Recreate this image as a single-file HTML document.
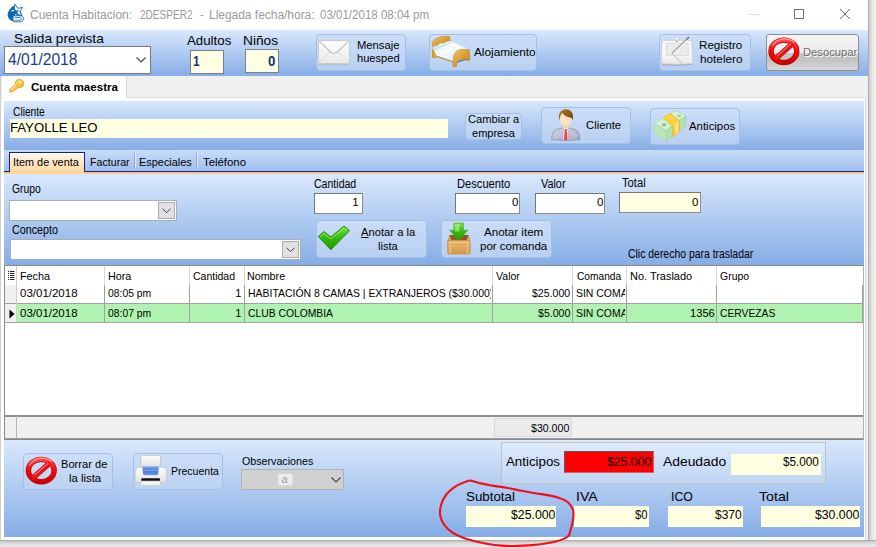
<!DOCTYPE html>
<html><head><meta charset="utf-8"><title>Cuenta Habitacion</title>
<style>
*{box-sizing:border-box;margin:0;padding:0}
html,body{width:876px;height:547px;overflow:hidden;background:#fff;font-family:"Liberation Sans",sans-serif}
.a{position:absolute}
.t{position:absolute;white-space:pre;line-height:1;transform-origin:0 0}
.g{background:linear-gradient(#d9e8fc,#86ade6)}
.btn{position:absolute;border:1px solid #a4c0ea;border-radius:4px;background:linear-gradient(rgba(204,222,247,.92),rgba(189,211,243,.9))}
.inp{position:absolute;background:#fff;border:1px solid #767676;border-right-color:#8c8c8c;border-bottom-color:#8c8c8c}
.y{position:absolute;background:#ffffe1}
.vl{position:absolute;width:1px;background:#a0a0a0}
.hl{position:absolute;height:1px;background:#a0a0a0}
.clip{position:absolute;overflow:hidden;height:18px}
.clip .t{left:0;top:5px}
</style></head><body>
<!-- window shadow / frame -->
<div class="a" style="left:868px;top:0;width:8px;height:547px;background:linear-gradient(90deg,#a2a2a2,#cfcfcf 20%,#e6e6e6 55%,#f3f3f3)"></div>
<div class="a" style="left:0;top:540px;width:876px;height:7px;background:linear-gradient(#9f9f9f,#c9c9c9 20%,#e3e3e3 60%,#ececec)"></div>
<div class="a" style="left:0;top:76px;width:1px;height:464px;background:#cfcfcf"></div>

<!-- title bar -->
<div class="a" style="left:0;top:0;width:868px;height:30px;background:#fff"></div>
<svg class="a" style="left:0;top:0" width="32" height="28" viewBox="0 0 32 28">
<circle cx="14.6" cy="14.6" r="7" fill="#0c68b2"/>
<path d="M8.8 10.6 L13 5.8 L15 6.8 L12 11Z" fill="#0c68b2"/>
<path d="M14.9 4.2 L17.8 8.3 L22.7 7.4 L19.7 11.4 L22.1 15.8 L17.3 14.2 L13.9 17.9 L14.0 12.8 L9.4 10.7 L14.2 9.2Z" fill="#fff" stroke="#0c68b2" stroke-width=".9" stroke-linejoin="miter"/>
<path d="M14.4 8.2 L16.1 10.5 L18.9 10.0 L17.2 12.3 L18.5 14.8 L15.8 13.9 L13.9 16.0 L13.9 13.2 L11.3 11.9 L14.0 11.0Z" fill="#0c68b2"/>
<path d="M13.2 15.8 H21 Q22.4 15.8 23.2 17 Q24.4 18.6 22.8 20.4 L21.4 21.8 H13.8 Q12.2 19 13.2 15.8Z" fill="#fff" stroke="#0c68b2" stroke-width=".9"/>
<path d="M14.6 17.6 H20.6 L21.6 18.8 L20.6 20.2 H14.8" stroke="#0c68b2" stroke-width=".8" fill="none"/>
</svg>
<!-- window controls -->
<div class="a" style="left:749px;top:14px;width:10px;height:1px;background:#dcdcdc"></div>
<div class="a" style="left:794px;top:9px;width:10px;height:10px;border:1px solid #707070"></div>
<svg class="a" style="left:839px;top:8px" width="12" height="12" viewBox="0 0 12 12"><path d="M1 1L11 11M11 1L1 11" stroke="#6a6a6a" stroke-width="1" fill="none"/></svg>

<!-- toolbar -->
<div class="a g" style="left:0;top:30px;width:868px;height:46px"></div>
<div class="a" style="left:4px;top:46px;width:147px;height:28px;background:#fff;border:1px solid #7a7a7a"></div>
<svg class="a" style="left:136px;top:57px" width="10" height="6" viewBox="0 0 10 6"><path d="M.5 .5L5 5L9.5 .5" stroke="#444" stroke-width="1.1" fill="none"/></svg>
<div class="a" style="left:190px;top:50px;width:34px;height:24px;background:#ffffe1;border:1px solid #808080;box-shadow:inset 0 0 0 1px #fafafa"></div>
<div class="a" style="left:245px;top:49px;width:34px;height:24px;background:#ffffe1;border:1px solid #808080;box-shadow:inset 0 0 0 1px #fafafa"></div>
<div class="btn" style="left:316px;top:34px;width:90px;height:37px"></div>
<div class="btn" style="left:429px;top:34px;width:108px;height:37px"></div>
<div class="btn" style="left:659px;top:34px;width:92px;height:37px"></div>
<div class="a" style="left:766px;top:34px;width:93px;height:37px;border:1px solid #8e8e8e;border-radius:3px;background:linear-gradient(#f4f4f4 0%,#ececec 51%,#c6c6c6 53%,#c2c2c2 70%,#d8d8d8 100%)"></div>
<!--ICONS_TOOLBAR-->

<!-- tab strip 1 -->
<div class="a" style="left:1px;top:76px;width:867px;height:22px;background:#f0f0f0"></div>
<div class="a" style="left:1px;top:97px;width:865px;height:1px;background:#dadada"></div>
<div class="a" style="left:2px;top:76px;width:125px;height:25px;background:#fff;border-right:1px solid #d9d9d9"></div>
<!-- tab page -->
<div class="a" style="left:1px;top:98px;width:865px;height:442px;background:#fff"></div>
<div class="a" style="left:865px;top:97px;width:1px;height:443px;background:#dadada"></div>
<div class="a" style="left:866px;top:76px;width:2px;height:464px;background:#f0f0f0"></div>

<!-- client panel -->
<div class="a g" style="left:4px;top:101px;width:860px;height:49px"></div>
<div class="y" style="left:10px;top:119px;width:438px;height:19px"></div>
<div class="btn" style="left:465px;top:113px;width:57px;height:27px"></div>
<div class="btn" style="left:541px;top:107px;width:90px;height:37px"></div>
<div class="btn" style="left:650px;top:108px;width:90px;height:37px"></div>

<!-- inner tab strip -->
<div class="a" style="left:4px;top:150px;width:860px;height:23px;background:linear-gradient(#c9ddf8,#9bbbed)"></div>
<div class="a" style="left:4px;top:171px;width:860px;height:1px;background:#1b1f8a"></div>
<div class="a" style="left:4px;top:172px;width:860px;height:2px;background:linear-gradient(#f3b878,#f9d3a8)"></div>
<div class="a" style="left:9px;top:152px;width:76px;height:20px;border:1px solid #1b1f8a;border-bottom:none;background:linear-gradient(#fff9ee,#ffd8a0)"></div><div class="a" style="left:10px;top:171px;width:74px;height:3px;background:#ffd59a"></div>
<div class="vl" style="left:134px;top:153px;height:16px;background:#8aa5d6"></div><div class="vl" style="left:135px;top:153px;height:16px;background:#e4eefc"></div>
<div class="vl" style="left:196px;top:153px;height:16px;background:#8aa5d6"></div><div class="vl" style="left:197px;top:153px;height:16px;background:#e4eefc"></div>

<!-- form area -->
<div class="a g" style="left:4px;top:174px;width:860px;height:91px"></div>
<div class="a" style="left:9px;top:200px;width:168px;height:21px;background:#fff;border:1px solid #abadb3"></div>
<div class="a" style="left:158px;top:202px;width:17px;height:17px;background:#e1e1e1;border:1px solid #adadad"></div>
<svg class="a" style="left:162px;top:208px" width="9" height="6" viewBox="0 0 9 6"><path d="M.5 .7L4.5 4.7L8.5 .7" stroke="#444" stroke-width="1" fill="none"/></svg>
<div class="a" style="left:10px;top:239px;width:291px;height:21px;background:#fff;border:1px solid #abadb3"></div>
<div class="a" style="left:282px;top:241px;width:17px;height:17px;background:#e1e1e1;border:1px solid #adadad"></div>
<svg class="a" style="left:286px;top:247px" width="9" height="6" viewBox="0 0 9 6"><path d="M.5 .7L4.5 4.7L8.5 .7" stroke="#444" stroke-width="1" fill="none"/></svg>
<div class="inp" style="left:314px;top:193px;width:49px;height:21px"></div>
<div class="inp" style="left:455px;top:193px;width:65px;height:21px"></div>
<div class="inp" style="left:535px;top:193px;width:70px;height:21px"></div>
<div class="inp" style="left:619px;top:192px;width:82px;height:21px;background:#ffffe1"></div>
<div class="btn" style="left:316px;top:220px;width:111px;height:38px"></div>
<div class="btn" style="left:441px;top:220px;width:111px;height:38px"></div>

<!-- grid -->
<div class="a" style="left:4px;top:265px;width:860px;height:175px;background:#fff;border:1px solid #8a8a8a;border-right-color:#b0b0b0"></div>
<div class="a" style="left:5px;top:285px;width:11px;height:37px;background:#f0f0f0"></div>
<div class="a" style="left:16px;top:304px;width:847px;height:18px;background:#b0f2b0"></div>
<div class="hl" style="left:5px;top:303px;width:858px"></div>
<div class="hl" style="left:5px;top:322px;width:858px"></div>
<div class="vl" style="left:16px;top:266px;height:56px;background:#d0d0d0"></div>
<div class="vl" style="left:104px;top:266px;height:19px;background:#d8d8d8"></div><div class="vl" style="left:104px;top:285px;height:37px"></div>
<div class="vl" style="left:189px;top:266px;height:19px;background:#d8d8d8"></div><div class="vl" style="left:189px;top:285px;height:37px"></div>
<div class="vl" style="left:244px;top:266px;height:19px;background:#d8d8d8"></div><div class="vl" style="left:244px;top:285px;height:37px"></div>
<div class="vl" style="left:492px;top:266px;height:19px;background:#d8d8d8"></div><div class="vl" style="left:492px;top:285px;height:37px"></div>
<div class="vl" style="left:572px;top:266px;height:19px;background:#d8d8d8"></div><div class="vl" style="left:572px;top:285px;height:37px"></div>
<div class="vl" style="left:626px;top:266px;height:19px;background:#d8d8d8"></div><div class="vl" style="left:626px;top:285px;height:37px"></div>
<div class="vl" style="left:716px;top:266px;height:19px;background:#d8d8d8"></div><div class="vl" style="left:716px;top:285px;height:37px"></div>
<div class="vl" style="left:862px;top:285px;height:37px"></div>
<!-- header icon & row indicator -->
<svg class="a" style="left:8px;top:271px" width="7" height="10" viewBox="0 0 7 10"><path d="M0 .5h1M2 .5h4.4M0 2.5h1M2 2.5h4.4M0 4.5h1M2 4.5h4.4M0 6.5h1M2 6.5h4.4M0 8.5h1M2 8.5h4.4" stroke="#222" stroke-width="1"/></svg>
<svg class="a" style="left:9px;top:308.5px" width="6" height="10" viewBox="0 0 6 10"><path d="M.5 .5L5.5 5L.5 9.5Z" fill="#000"/></svg>
<!-- footer -->
<div class="a" style="left:5px;top:415px;width:858px;height:24px;background:#f0f0f0;border-top:2px solid #8f8f8f;border-bottom:1px solid #9a9a9a"></div>
<div class="vl" style="left:16px;top:416px;height:22px;background:#b5b5b5"></div>
<div class="a" style="left:494px;top:418px;width:78px;height:19px;background:#e8eaec;border:1px solid #d9d9d9"></div>
<!-- clipped cells -->
<div class="clip" style="left:247.5px;top:283px;width:243.5px"><span class="t" style="font-size:11px;transform:scaleX(.95)">HABITACIÓN 8 CAMAS | EXTRANJEROS ($30.000)</span></div>
<div class="clip" style="left:575.5px;top:283px;width:49px"><span class="t" style="font-size:11px;transform:scaleX(.95)">SIN COMANDA</span></div>
<div class="clip" style="left:575.5px;top:303px;width:49px"><span class="t" style="font-size:11px;transform:scaleX(.95)">SIN COMANDA</span></div>

<!-- bottom panel -->
<div class="a g" style="left:4px;top:440px;width:860px;height:97px"></div>
<div class="btn" style="left:23px;top:453px;width:90px;height:37px"></div>
<div class="btn" style="left:133px;top:453px;width:90px;height:37px"></div>
<div class="a" style="left:241px;top:469px;width:103px;height:21px;background:#d1d1d1;border:1px solid #b2b2b2"></div>
<svg class="a" style="left:331px;top:477px" width="10" height="6" viewBox="0 0 10 6"><path d="M.5 .5L5 5L9.5 .5" stroke="#444" stroke-width="1.1" fill="none"/></svg>
<div class="a" style="left:501px;top:442px;width:325px;height:42px;background:rgba(255,255,255,.16);border:1px solid #c4c2be"></div>
<div class="a" style="left:564px;top:451px;width:90px;height:22px;background:#f00;border:1px solid #5a5a5a;border-right-color:#c66;border-bottom-color:#c66"></div>
<div class="y" style="left:731px;top:454px;width:90px;height:21px"></div>
<div class="y" style="left:466px;top:506px;width:90px;height:21px"></div>
<div class="y" style="left:574px;top:506px;width:75px;height:21px"></div>
<div class="y" style="left:668px;top:506px;width:75px;height:21px"></div>
<div class="y" style="left:761px;top:506px;width:99px;height:21px"></div>
<!--ICONS_BEGIN--><svg class="a" style="left:0;top:0" width="876" height="547" viewBox="0 0 876 547">
<defs>
<linearGradient id="env" x1="0" y1="0" x2="0" y2="1"><stop offset="0" stop-color="#fdfdfd"/><stop offset="1" stop-color="#e9e9e9"/></linearGradient>
<linearGradient id="wood" x1="0" y1="0" x2="1" y2="1"><stop offset="0" stop-color="#f3c862"/><stop offset=".5" stop-color="#dc9e30"/><stop offset="1" stop-color="#b97b18"/></linearGradient>
<linearGradient id="sheet" x1="0" y1="0" x2="1" y2="1"><stop offset="0" stop-color="#cfe8fb"/><stop offset=".45" stop-color="#fbfdff"/><stop offset="1" stop-color="#c6e1f7"/></linearGradient>
<linearGradient id="red" x1="0" y1="0" x2="0" y2="1"><stop offset="0" stop-color="#ff4a4a"/><stop offset=".45" stop-color="#f20d0d"/><stop offset="1" stop-color="#d10000"/></linearGradient>
<linearGradient id="tab" x1="0" y1="0" x2="0" y2="1"><stop offset="0" stop-color="#fdfdfd"/><stop offset=".7" stop-color="#f3f3f3"/><stop offset="1" stop-color="#e6e6e6"/></linearGradient>
<linearGradient id="gold" x1="0" y1="0" x2="1" y2="1"><stop offset="0" stop-color="#ffe890"/><stop offset=".6" stop-color="#f7c22c"/><stop offset="1" stop-color="#e79a18"/></linearGradient>
<linearGradient id="suit" x1="0" y1="0" x2="1" y2="1"><stop offset="0" stop-color="#d9dbe8"/><stop offset=".6" stop-color="#b7bacd"/><stop offset="1" stop-color="#8e92ac"/></linearGradient>
<linearGradient id="hair" x1="0" y1="0" x2="1" y2="1"><stop offset="0" stop-color="#b07a22"/><stop offset="1" stop-color="#6e4308"/></linearGradient>
<linearGradient id="band" x1="0" y1="0" x2="1" y2="0"><stop offset="0" stop-color="#ffc41a"/><stop offset=".7" stop-color="#ffe9a8"/><stop offset="1" stop-color="#ffc41a"/></linearGradient>
<linearGradient id="grn" x1="0" y1="0" x2="0" y2="1"><stop offset="0" stop-color="#7de34a"/><stop offset=".5" stop-color="#33bb0a"/><stop offset="1" stop-color="#249a00"/></linearGradient>
<linearGradient id="crate" x1="0" y1="0" x2="0" y2="1"><stop offset="0" stop-color="#f2c27c"/><stop offset="1" stop-color="#d99a4a"/></linearGradient>
<linearGradient id="prn" x1="0" y1="0" x2="0" y2="1"><stop offset="0" stop-color="#ffffff"/><stop offset="1" stop-color="#e2e2e2"/></linearGradient>
<linearGradient id="blu" x1="0" y1="0" x2="0" y2="1"><stop offset="0" stop-color="#7aa7ea"/><stop offset=".5" stop-color="#3d74d6"/><stop offset="1" stop-color="#6d9ce6"/></linearGradient>
</defs>
<!-- envelope -->
<g>
<path d="M318.6 64 H349.4" stroke="#a7a9ad" stroke-width="1"/>
<rect x="318.5" y="40.5" width="31" height="23" rx="1" fill="url(#env)" stroke="#c9cbd0"/>
<path d="M319 63 L330 51.5 M349 63 L338 51.5" stroke="#dcdcdc" stroke-width="1" fill="none"/>
<path d="M319.3 41.2 L330.5 52 Q334 55 337.5 52 L348.7 41.2" stroke="#bfc0c4" stroke-width="1.1" fill="none"/>
</g>
<!-- bed -->
<g>
<path d="M432.2 41.9 Q437 36.6 445 36.3 L449.8 36.6 L450.2 41.3 L432.6 47.6Z" fill="url(#wood)" stroke="#c58a20" stroke-width=".6"/>
<path d="M432 48.6 L432 57.8 L435.6 58.4 L436.2 49.8Z" fill="#d99a2a"/>
<path d="M432.6 47.2 L450.2 41 L467 48.2 L453 60.6 L436.2 55.6Z" fill="url(#sheet)"/>
<path d="M432.6 47 L438 45 L450.2 41 L452.5 42 L441 47.4 L436 50.2 L432.8 49.4Z" fill="#c6e2f8"/>
<path d="M438.5 44.6 Q441 43 444 43.4 Q442 45.6 439.2 46Z M445 42.6 Q447.6 41 450.2 41.6 Q448.6 43.6 445.8 43.8Z" fill="#f4faff"/>
<path d="M436 55.6 L453 61.4 L453 62.6 L436 56.8Z" fill="#c98a1e"/>
<path d="M453 66.4 L453.4 57 Q455.6 49.2 461.4 49.4 L469.2 49.8 L469.9 60.2 L466.2 60.6 L466 58.4 L456.8 61.4 L456.6 66.6Z" fill="url(#wood)" stroke="#c58a20" stroke-width=".6"/>
<path d="M457 62.4 L466 59.2" stroke="#2b58d8" stroke-width=".9"/>
</g>
<!-- tablet -->
<g>
<path d="M676.8 36.4 q2.2 0 2.4 3.8 h-4.8 q.2-3.8 2.4-3.8z" fill="#f4f4f4" stroke="#c0c0c0" stroke-width=".6"/>
<path d="M662 64.2 Q677 66.2 692.6 64" stroke="#a9abb0" stroke-width="1.4" fill="none"/>
<path d="M662.4 40.4 H691.2 Q692.8 52 692.6 63.4 Q677 65.2 661.4 63.6 Q661 52 662.4 40.4Z" fill="url(#tab)" stroke="#c6c8cc" stroke-width=".7"/>
<rect x="666.3" y="43" width="21.8" height="12.4" fill="#ebebec" stroke="#d6d6d9" stroke-width=".8"/>
<rect x="676" y="40.6" width="1.8" height="1.4" fill="#f6a56a"/>
<path d="M671.9 53.6 L681.8 63" stroke="#d3d3d6" stroke-width="1.7"/>
<path d="M688.9 37.3 L671.8 53.4" stroke="#98989c" stroke-width="1.2"/>
<path d="M689.6 38 L673 53.8" stroke="#fafafa" stroke-width=".7"/>
<path d="M689 37.2 L686.6 39.5" stroke="#7a7a7e" stroke-width="1.6"/>
</g>
<!-- no entry top -->
<g>
<ellipse cx="783.9" cy="51.35" rx="12.9" ry="11.3" fill="none" stroke="#b00000" stroke-width="5.3"/>
<path d="M774.9 59.2 L792.9 43.5" stroke="#b00000" stroke-width="5.3"/>
<ellipse cx="783.9" cy="51.2" rx="12.9" ry="11.3" fill="none" stroke="url(#red)" stroke-width="4.4"/>
<path d="M774.9 59.1 L792.9 43.3" stroke="#f01414" stroke-width="4.4"/>
<path d="M772.3 46.0 Q775.9 39.6 783.9 38.9 Q790.9 38.9 794.5 42.6" stroke="#ff9a9a" stroke-width="1.3" fill="none" opacity=".9"/>
<path d="M777.3 55.8 L791.1 43.6" stroke="#ff8c8c" stroke-width="1.1" opacity=".85"/>
</g>
<!-- key -->
<g>
<path d="M10 92.6 L9.6 89.6 L15.4 84.4 Q14.4 81 17.4 79.6 Q20.6 78.4 22.8 80.6 Q24.6 83 23.2 85.8 Q21.4 88.2 18.4 87.4 L17 88.8 L15.8 88.4 L15.4 90 L14 89.8 L13.4 91.4 L12 91.4Z" fill="url(#gold)" stroke="#e39a2c" stroke-width=".8"/>
<circle cx="20.4" cy="82.2" r="1.2" fill="#fff6d0"/>
<path d="M11 90 L16 85.4" stroke="#fff3b8" stroke-width=".9"/>
</g>
<!-- person -->
<g>
<path d="M551.8 139.6 Q551.6 131.4 556.4 129.6 L562.6 127.8 L569.2 127.8 L575.4 129.6 Q580 131.6 579.8 139.6 Q566 141.4 551.8 139.6Z" fill="url(#suit)" stroke="#8489a3" stroke-width=".7"/>
<path d="M562.8 127.6 L565.8 130 L568.8 127.6 L567.6 126 L564 126Z" fill="#fff"/>
<path d="M564.2 128.8 L567.4 128.8 L568.4 140 L563.2 140Z" fill="#f4f4f8"/><path d="M564.9 129 L566.7 129 L567.6 140 L564 140Z" fill="#f0404a"/><path d="M570.5 131.5 L578.5 134 L578.8 139.3 Q574 140 570 140.1Z" fill="#fff" opacity=".18"/>
<path d="M563 122 L563 127 Q565.8 129 568.6 127 L568.6 122Z" fill="#f7cf9c"/>
<ellipse cx="565.8" cy="118.8" rx="5.6" ry="7.2" fill="#fde2bd"/>
<path d="M559.4 120.4 Q557.6 112.4 562.6 110 Q568 108 571.6 111.8 Q574 115.4 572.4 120.2 Q571.8 118 570.6 117.6 Q565 116.8 561.8 112.8 Q559.8 116 559.4 120.4Z" fill="url(#hair)"/>
</g>
<!-- money -->
<g>
<path d="M654 123.3 L675.8 110.4 L685.8 116 L666.1 130.5Z" fill="#d2f3d2" stroke="#a8dba8" stroke-width=".6"/>
<path d="M654 123.3 L666.1 130.5 L666.1 141.6 L654 131.9Z" fill="#b9e7b9" stroke="#9fd49f" stroke-width=".6"/>
<path d="M666.1 130.5 L685.8 116 L685.8 125.7 L666.1 141.6Z" fill="#afe0af" stroke="#98cd98" stroke-width=".6"/>
<ellipse cx="664" cy="124.8" rx="2.2" ry="1.6" fill="#86c486"/>
<ellipse cx="679.2" cy="116" rx="2" ry="1.4" fill="#9fd49f"/>
<path d="M663.4 118 L670 113.2 L679.4 120.8 L672.8 126.6Z" fill="#ffd24a"/>
<path d="M672.8 126.6 L679.4 120.8 L679.4 131.4 L672.8 136.8Z" fill="url(#band)"/>
<path d="M663.4 118 L670 113.2 L679.4 120.8 L679.4 131.4 L672.8 136.8 L672.8 126.6Z" fill="none" stroke="#f7b514" stroke-width=".8"/>
</g>
<!-- check -->
<g>
<path d="M318.3 236.6 L323.8 231.6 L330.9 237 L344 226.1 L349.5 230.7 L330.9 249.7Z" fill="url(#grn)" stroke="#1d8a00" stroke-width="1" stroke-linejoin="round"/>
<path d="M320.4 236.4 L323.8 233.4 L330.9 238.8 L344 228 L346.8 230.2" stroke="#a4f07a" stroke-width="1" fill="none" opacity=".8"/>
</g>
<!-- crate -->
<g>
<path d="M449.4 234.9 L468.7 234.9 L470 240.6 L447.7 240.6Z" fill="#8a5a24"/>
<path d="M449.4 234.9 L451.6 240.4 L447.8 240.6Z M468.7 234.9 L466.4 240.4 L470 240.6Z" fill="#e2a85c"/>
<rect x="447.7" y="240.4" width="22.3" height="13.5" rx="1" fill="url(#crate)" stroke="#c4863a" stroke-width=".8"/>
<path d="M448.4 244.6 H469.4 M448.4 248 H469.4 M448.4 251 H469.4" stroke="#cf9446" stroke-width=".6"/>
<path d="M450.2 241 V253.4 M467.6 241 V253.4" stroke="#e9bd82" stroke-width="1.6"/>
<path d="M454 223.2 H463.3 V230.3 H467.9 L458.6 240 L449.8 230.3 H454Z" fill="url(#grn)" stroke="#3cae1a" stroke-width=".7" stroke-linejoin="round"/>
<path d="M455 224 H459.4 V231.4 H455Z" fill="#b8f49a" opacity=".6"/>
</g>
<!-- printer -->
<g>
<path d="M140.6 467 V456.4 H141.6 V455.6 H159.4 V455 H160.4 V467Z" fill="url(#prn)" stroke="#bdbdbd" stroke-width=".7"/>
<path d="M139.6 467.2 H161.8 Q166.8 467.6 166.6 472.6 V480.2 Q166.6 482.4 164.4 482.4 H137.6 Q135.4 482.4 135.4 480.2 V472.6 Q135.4 467.6 139.6 467.2Z" fill="url(#prn)" stroke="#c2c2c2" stroke-width=".7"/>
<path d="M142.4 466.6 H158.8 L158.2 474 Q157.8 475.2 156.6 475.2 H144.6 Q143.4 475.2 143 474Z" fill="url(#blu)"/>
<path d="M143 470.6 H158.2" stroke="#9dc0f4" stroke-width=".7"/>
<rect x="141.2" y="478.2" width="18.8" height="2.8" rx=".8" fill="#111"/>
<path d="M141.6 481 H159.6 L160.8 485.4 H140.4Z" fill="#f4f4f4" stroke="#c4c4c4" stroke-width=".6"/>
</g>
<!-- no entry bottom -->
<g>
<ellipse cx="41.25" cy="470.59999999999997" rx="12.9" ry="11.3" fill="none" stroke="#b00000" stroke-width="5.3"/>
<path d="M32.2 478.5 L50.2 462.7" stroke="#b00000" stroke-width="5.3"/>
<ellipse cx="41.25" cy="470.45" rx="12.9" ry="11.3" fill="none" stroke="url(#red)" stroke-width="4.4"/>
<path d="M32.2 478.3 L50.2 462.6" stroke="#f01414" stroke-width="4.4"/>
<path d="M29.6 465.2 Q33.2 458.8 41.2 458.1 Q48.2 458.1 51.9 461.8" stroke="#ff9a9a" stroke-width="1.3" fill="none" opacity=".9"/>
<path d="M34.6 475.1 L48.5 462.8" stroke="#ff8c8c" stroke-width="1.1" opacity=".85"/>
</g>
<!-- obs page icon -->
<g>
<path d="M278 473.8 H290.4 L292.8 476.2 V485.2 H278Z" fill="#ececec" stroke="#dadada" stroke-width=".5"/>
<path d="M290.4 473.8 V476.2 H292.8Z" fill="#fafafa"/>
</g>
</svg>
<span class="t" style="left:281.5px;top:474.3px;font-size:11px;font-style:italic;color:#9a9a9a">a</span>
<!--ICONS_END-->
<span class="t" style="left:30.00px;top:9.00px;font-size:12px;transform:scaleX(1.0000);color:#9a9a9a;">Cuenta Habitacion:</span>
<span class="t" style="left:140.00px;top:9.00px;font-size:12px;transform:scaleX(0.8387);color:#9a9a9a;">2DESPER2</span>
<span class="t" style="left:199.50px;top:9.00px;font-size:12px;transform:scaleX(0.8750);color:#9a9a9a;">-</span>
<span class="t" style="left:209.00px;top:9.00px;font-size:12px;transform:scaleX(0.9952);color:#9a9a9a;">Llegada fecha/hora:</span>
<span class="t" style="left:320.00px;top:9.00px;font-size:12px;transform:scaleX(0.9611);color:#9a9a9a;">03/01/2018 08:04 pm</span>
<span class="t" style="left:13.79px;top:32.00px;font-size:13.6px;transform:scaleX(1.0068);color:#000;">Salida prevista</span>
<span class="t" style="left:7.50px;top:52.00px;font-size:16px;transform:scaleX(0.9761);color:#1c3a8e;">4/01/2018</span>
<span class="t" style="left:187.00px;top:34.00px;font-size:13.4px;transform:scaleX(0.9911);color:#000;">Adultos</span>
<span class="t" style="left:242.68px;top:34.00px;font-size:13.4px;transform:scaleX(1.0242);color:#000;">Niños</span>
<span class="t" style="left:192.88px;top:54.00px;font-size:14px;transform:scaleX(0.8500);color:#14307c;font-weight:bold;">1</span>
<span class="t" style="left:267.50px;top:54.00px;font-size:14px;transform:scaleX(0.9375);color:#14307c;font-weight:bold;">0</span>
<span class="t" style="left:356.98px;top:40.00px;font-size:11px;transform:scaleX(1.0200);color:#000;">Mensaje</span>
<span class="t" style="left:356.99px;top:53.00px;font-size:11px;transform:scaleX(1.0098);color:#000;">huesped</span>
<span class="t" style="left:474.20px;top:47.00px;font-size:11px;transform:scaleX(1.0719);color:#000;">Alojamiento</span>
<span class="t" style="left:699.34px;top:40.00px;font-size:11px;transform:scaleX(1.0575);color:#000;">Registro</span>
<span class="t" style="left:700.43px;top:54.00px;font-size:11px;transform:scaleX(1.0692);color:#000;">hotelero</span>
<span class="t" style="left:803.88px;top:48.00px;font-size:11px;transform:scaleX(1.0212);color:#ffffff;">Desocupar</span>
<span class="t" style="left:802.88px;top:47.00px;font-size:11px;transform:scaleX(1.0212);color:#6d6d6d;">Desocupar</span>
<span class="t" style="left:31.00px;top:81.00px;font-size:11.6px;transform:scaleX(1.0000);color:#000;font-weight:bold;">Cuenta maestra</span>
<span class="t" style="left:12.50px;top:106.00px;font-size:12px;transform:scaleX(0.8514);color:#000;">Cliente</span>
<span class="t" style="left:9.52px;top:121.00px;font-size:13.4px;transform:scaleX(0.9830);color:#000;">FAYOLLE LEO</span>
<span class="t" style="left:468.00px;top:114.00px;font-size:11px;transform:scaleX(1.0098);color:#000;">Cambiar a</span>
<span class="t" style="left:472.20px;top:128.00px;font-size:11px;transform:scaleX(1.0023);color:#000;">empresa</span>
<span class="t" style="left:586.00px;top:120.00px;font-size:11px;transform:scaleX(1.0235);color:#000;">Cliente</span>
<span class="t" style="left:688.80px;top:121.00px;font-size:11px;transform:scaleX(1.0356);color:#000;">Anticipos</span>
<span class="t" style="left:13.36px;top:157.00px;font-size:11.5px;transform:scaleX(0.9435);color:#000;">Item de venta</span>
<span class="t" style="left:89.57px;top:157.00px;font-size:11.5px;transform:scaleX(0.9262);color:#000;">Facturar</span>
<span class="t" style="left:139.25px;top:157.00px;font-size:11.5px;transform:scaleX(0.9500);color:#000;">Especiales</span>
<span class="t" style="left:202.50px;top:157.00px;font-size:11.5px;transform:scaleX(0.9884);color:#000;">Teléfono</span>
<span class="t" style="left:11.50px;top:183.00px;font-size:12px;transform:scaleX(0.8636);color:#000;">Grupo</span>
<span class="t" style="left:11.50px;top:224.00px;font-size:12px;transform:scaleX(0.8922);color:#000;">Concepto</span>
<span class="t" style="left:314.40px;top:178.00px;font-size:12px;transform:scaleX(0.8792);color:#000;">Cantidad</span>
<span class="t" style="left:457.47px;top:178.00px;font-size:12px;transform:scaleX(0.9286);color:#000;">Descuento</span>
<span class="t" style="left:541.30px;top:178.00px;font-size:12px;transform:scaleX(0.9037);color:#000;">Valor</span>
<span class="t" style="left:622.20px;top:177.00px;font-size:12px;transform:scaleX(0.9320);color:#000;">Total</span>
<span class="t" style="left:352.25px;top:197.00px;font-size:11.5px;transform:scaleX(1.0000);color:#000;">1</span>
<span class="t" style="left:512.00px;top:197.00px;font-size:11.5px;transform:scaleX(1.0000);color:#000;">0</span>
<span class="t" style="left:597.00px;top:197.00px;font-size:11.5px;transform:scaleX(1.0000);color:#000;">0</span>
<span class="t" style="left:692.00px;top:197.00px;font-size:11.5px;transform:scaleX(1.0000);color:#000;">0</span>
<span class="t" style="left:361.10px;top:227.00px;font-size:11px;transform:scaleX(1.0189);color:#000;"><u>A</u>notar a la</span>
<span class="t" style="left:378.40px;top:241.00px;font-size:11px;transform:scaleX(1.0050);color:#000;">lista</span>
<span class="t" style="left:484.00px;top:227.00px;font-size:11px;transform:scaleX(1.0536);color:#000;">Anotar item</span>
<span class="t" style="left:480.30px;top:241.00px;font-size:11px;transform:scaleX(1.0469);color:#000;">por comanda</span>
<span class="t" style="left:627.60px;top:248.00px;font-size:12px;transform:scaleX(0.8694);color:#000;">Clic derecho para trasladar</span>
<span class="t" style="left:19.82px;top:271.00px;font-size:11px;transform:scaleX(0.9833);color:#000;">Fecha</span>
<span class="t" style="left:107.52px;top:271.00px;font-size:11px;transform:scaleX(0.9783);color:#000;">Hora</span>
<span class="t" style="left:193.00px;top:271.00px;font-size:11px;transform:scaleX(0.9545);color:#000;">Cantidad</span>
<span class="t" style="left:247.03px;top:271.00px;font-size:11px;transform:scaleX(0.9737);color:#000;">Nombre</span>
<span class="t" style="left:496.00px;top:271.00px;font-size:11px;transform:scaleX(0.9600);color:#000;">Valor</span>
<span class="t" style="left:576.60px;top:271.00px;font-size:11px;transform:scaleX(0.9250);color:#000;">Comanda</span>
<span class="t" style="left:629.60px;top:271.00px;font-size:11px;transform:scaleX(0.9967);color:#000;">No. Traslado</span>
<span class="t" style="left:720.40px;top:271.00px;font-size:11px;transform:scaleX(0.9533);color:#000;">Grupo</span>
<span class="t" style="left:19.50px;top:288.00px;font-size:11px;transform:scaleX(1.0455);color:#000;">03/01/2018</span>
<span class="t" style="left:108.00px;top:288.00px;font-size:11px;transform:scaleX(0.9413);color:#000;">08:05 pm</span>
<span class="t" style="left:235.25px;top:288.00px;font-size:11px;transform:scaleX(1.0000);color:#000;">1</span>
<span class="t" style="left:532.00px;top:288.00px;font-size:11px;transform:scaleX(0.9600);color:#000;">$25.000</span>
<span class="t" style="left:19.50px;top:308.00px;font-size:11px;transform:scaleX(1.0455);color:#000;">03/01/2018</span>
<span class="t" style="left:108.00px;top:308.00px;font-size:11px;transform:scaleX(0.9413);color:#000;">08:07 pm</span>
<span class="t" style="left:235.25px;top:308.00px;font-size:11px;transform:scaleX(1.0000);color:#000;">1</span>
<span class="t" style="left:247.50px;top:308.00px;font-size:11px;transform:scaleX(0.9396);color:#000;">CLUB COLOMBIA</span>
<span class="t" style="left:537.70px;top:308.00px;font-size:11px;transform:scaleX(0.9618);color:#000;">$5.000</span>
<span class="t" style="left:689.69px;top:308.00px;font-size:11px;transform:scaleX(1.0130);color:#000;">1356</span>
<span class="t" style="left:719.70px;top:308.00px;font-size:11px;transform:scaleX(0.9356);color:#000;">CERVEZAS</span>
<span class="t" style="left:530.50px;top:423.00px;font-size:11px;transform:scaleX(0.9625);color:#000;">$30.000</span>
<span class="t" style="left:61.19px;top:459.00px;font-size:11px;transform:scaleX(1.0111);color:#000;">Borrar de</span>
<span class="t" style="left:69.40px;top:473.00px;font-size:11px;transform:scaleX(1.0290);color:#000;">la lista</span>
<span class="t" style="left:170.54px;top:466.00px;font-size:11px;transform:scaleX(0.9551);color:#000;">Precuenta</span>
<span class="t" style="left:241.70px;top:456.00px;font-size:11px;transform:scaleX(0.9712);color:#000;">Observaciones</span>
<span class="t" style="left:506.40px;top:455.00px;font-size:13.4px;transform:scaleX(0.9926);color:#000;">Anticipos</span>
<span class="t" style="left:606.90px;top:455.00px;font-size:13.4px;transform:scaleX(0.9146);color:#0a0000;">$25.000</span>
<span class="t" style="left:662.80px;top:455.00px;font-size:13.4px;transform:scaleX(1.0344);color:#000;">Adeudado</span>
<span class="t" style="left:783.10px;top:455.00px;font-size:13.4px;transform:scaleX(0.8756);color:#000;">$5.000</span>
<span class="t" style="left:466.00px;top:490.00px;font-size:13.4px;transform:scaleX(0.9958);color:#000;">Subtotal</span>
<span class="t" style="left:575.95px;top:490.00px;font-size:13.4px;transform:scaleX(1.0500);color:#000;">IVA</span>
<span class="t" style="left:671.48px;top:490.00px;font-size:13.4px;transform:scaleX(0.9174);color:#000;">ICO</span>
<span class="t" style="left:759.30px;top:490.00px;font-size:13.4px;transform:scaleX(1.0607);color:#000;">Total</span>
<span class="t" style="left:510.60px;top:508.00px;font-size:13.4px;transform:scaleX(0.9167);color:#000;">$25.000</span>
<span class="t" style="left:635.00px;top:508.00px;font-size:13.4px;transform:scaleX(0.8400);color:#000;">$0</span>
<span class="t" style="left:714.60px;top:508.00px;font-size:13.4px;transform:scaleX(0.8967);color:#000;">$370</span>
<span class="t" style="left:814.60px;top:508.00px;font-size:13.4px;transform:scaleX(0.9146);color:#000;">$30.000</span>
<!-- red annotation -->
<svg class="a" style="left:0;top:0" width="876" height="547" viewBox="0 0 876 547"><path d="M470.2 480.5 C471.9 481.0 476.8 482.5 480.5 483.4 C484.2 484.2 487.9 484.8 492.5 485.6 C497.1 486.4 503.0 487.1 507.9 488.0 C512.8 488.9 517.0 489.9 521.6 490.8 C526.2 491.7 530.7 492.4 535.3 493.2 C539.9 494.0 545.0 494.6 549.0 495.4 C553.0 496.2 556.1 496.9 559.3 498.0 C562.4 499.1 565.6 500.3 567.9 502.3 C570.2 504.3 572.1 507.0 573.0 510.0 C573.9 513.0 573.4 516.8 573.0 520.2 C572.6 523.6 571.3 527.8 570.4 530.5 C569.5 533.2 570.2 534.6 567.8 536.5 C565.4 538.4 560.8 540.3 555.9 541.6 C551.0 542.9 545.0 543.8 538.7 544.5 C532.4 545.2 524.5 545.7 518.2 545.9 C511.9 546.1 506.7 546.0 501.0 545.6 C495.3 545.2 489.7 544.4 484.0 543.3 C478.3 542.2 471.9 540.7 466.8 539.0 C461.7 537.3 456.8 535.3 453.1 533.0 C449.4 530.7 446.7 528.2 444.6 525.4 C442.5 522.6 440.9 519.4 440.3 516.0 C439.7 512.6 440.1 508.4 441.1 504.8 C442.1 501.2 444.0 497.5 446.3 494.5 C448.6 491.5 452.0 488.8 454.8 486.8 C457.6 484.8 460.8 483.7 463.4 482.6 C466.0 481.5 469.2 480.8 470.4 480.4" stroke="#f0101a" stroke-width="2.1" fill="none" stroke-linecap="round"/></svg>
</body></html>
